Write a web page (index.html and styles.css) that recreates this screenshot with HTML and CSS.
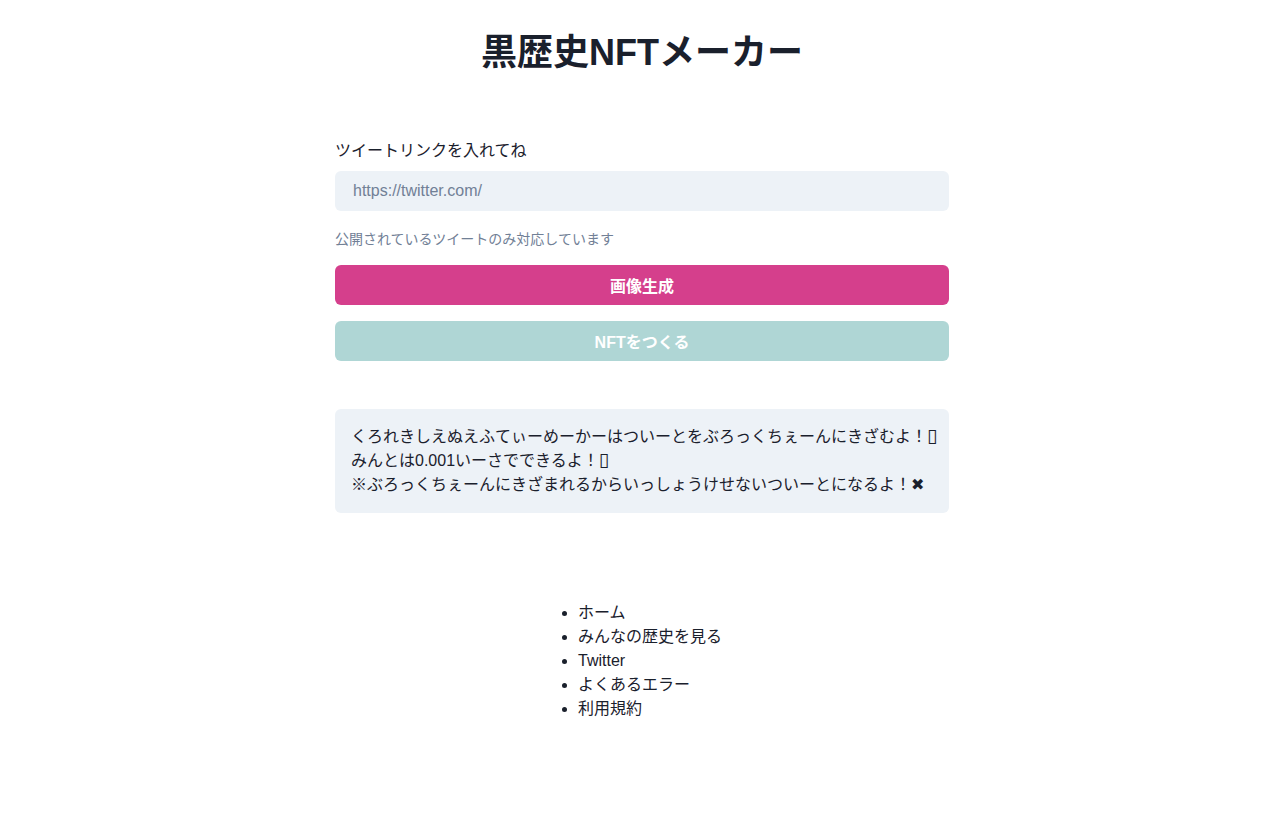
FILE: index.html
```html
<!DOCTYPE html>
<html lang="ja">
<head>
<meta charset="utf-8">
<title>黒歴史NFTメーカー</title>
<link rel="stylesheet" href="styles.css">
</head>
<body>
<main class="page">
  <h1 class="title">黒歴史NFTメーカー</h1>
  <section class="form">
    <label class="label" for="url">ツイートリンクを入れてね</label>
    <input id="url" class="input" type="text" placeholder="https://twitter.com/">
    <p class="help">公開されているツイートのみ対応しています</p>
    <button class="btn btn-pink">画像生成</button>
    <button class="btn btn-teal">NFTをつくる</button>
  </section>
  <section class="notice">
    <p>くろれきしえぬえふてぃーめーかーはついーとをぶろっくちぇーんにきざむよ！<span class="tofu">&#x25AF;</span></p>
    <p>みんとは0.001いーさでできるよ！<span class="tofu">&#x25AF;</span></p>
    <p>※ぶろっくちぇーんにきざまれるからいっしょうけせないついーとになるよ！&#x2716;</p>
  </section>
  <nav class="footer">
    <ul class="links">
      <li>ホーム</li>
      <li>みんなの歴史を見る</li>
      <li>Twitter</li>
      <li>よくあるエラー</li>
      <li>利用規約</li>
    </ul>
  </nav>
</main>
</body>
</html>
```
FILE: styles.css
```css
* { box-sizing: border-box; }
html, body { margin: 0; padding: 0; background: #fff; }
body {
  font-family: "Liberation Sans", Arial, "Noto Sans CJK JP", sans-serif;
  color: #1a202c;
  font-size: 16px;
  line-height: 24px;
}
.page {
  width: 614px;
  margin: 0 auto;
  display: flex;
  flex-direction: column;
}
.title {
  margin: 29px 0 0;
  text-align: center;
  font-size: 36px;
  line-height: 48px;
  font-weight: 700;
}
.form {
  margin-top: 62px;
  display: flex;
  flex-direction: column;
}
.label {
  display: block;
  line-height: 24px;
  margin-bottom: 8px;
}
.input {
  height: 40px;
  border: none;
  border-radius: 6px;
  background: #edf2f7;
  padding: 0 18px;
  font-family: inherit;
  font-size: 16px;
  color: #1a202c;
  outline: none;
}
.input::placeholder { color: #718096; opacity: 1; }
.help {
  margin: 17px 0 15px;
  font-size: 14px;
  line-height: 22px;
  color: #718096;
}
.btn {
  height: 40px;
  border: none;
  border-radius: 6px;
  color: #fff;
  font-family: inherit;
  font-size: 16px;
  font-weight: 700;
  padding: 0;
}
.btn-pink { background: #d53f8c; }
.btn-teal { background: #afd6d5; margin-top: 16px; }
.notice {
  margin-top: 48px;
  background: #edf2f7;
  border-radius: 6px;
  padding: 16px;
}
.notice p { margin: 0; white-space: nowrap; }
.tofu {
  font-family: "DejaVu Sans", sans-serif;
  font-size: 19px;
  line-height: 20px;
}
.footer {
  margin-top: 88px;
  display: flex;
  justify-content: center;
}
.links {
  margin: 0;
  padding: 0 0 0 40px;
  margin-left: -24px;
}
```
